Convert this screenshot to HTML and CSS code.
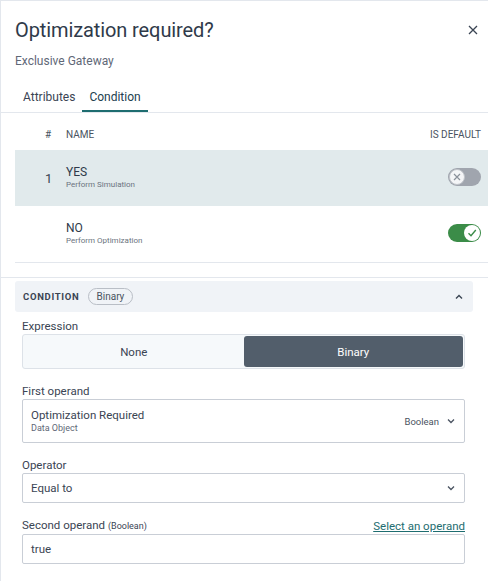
FILE: index.html
```html
<!DOCTYPE html>
<html>
<head>
<meta charset="utf-8">
<link rel="stylesheet" href="styles.css">
</head>
<body>
<div class="panel">
  <div class="head">
    <h1 class="title">Optimization required?</h1>
    <span class="close">
      <svg width="10" height="10" viewBox="0 0 10 10"><path d="M1 1L9 9M9 1L1 9" stroke="#3a4453" stroke-width="1.3" fill="none"/></svg>
    </span>
  </div>
  <div class="subtitle">Exclusive Gateway</div>
  <div class="tabs">
    <span class="tab">Attributes</span>
    <span class="tab active">Condition</span>
  </div>
  <div class="table">
    <div class="thead">
      <span class="c-num">#</span>
      <span class="c-name">NAME</span>
      <span class="c-def">IS DEFAULT</span>
    </div>
    <div class="row selected">
      <span class="c-num num">1</span>
      <span class="c-name">
        <span class="rname">YES</span>
        <span class="rdesc">Perform Simulation</span>
      </span>
      <span class="c-def">
        <span class="toggle off"><span class="knob">
          <svg width="10" height="10" viewBox="0 0 10 10"><path d="M2 2L8 8M8 2L2 8" stroke="#8a909a" stroke-width="1.2" fill="none"/></svg>
        </span></span>
      </span>
    </div>
    <div class="row">
      <span class="c-num num"></span>
      <span class="c-name">
        <span class="rname">NO</span>
        <span class="rdesc">Perform Optimization</span>
      </span>
      <span class="c-def">
        <span class="toggle on"><span class="knob">
          <svg width="12" height="12" viewBox="0 0 12 12"><path d="M2.5 6.2L5 8.7L9.8 3" stroke="#3b8c48" stroke-width="1.4" fill="none"/></svg>
        </span></span>
      </span>
    </div>
  </div>
  <div class="sep"></div>
  <div class="section">
    <div class="sec-head">
      <span class="sec-title">CONDITION</span>
      <span class="pill">Binary</span>
      <span class="chev-up">
        <svg width="8" height="6" viewBox="0 0 8 6"><path d="M1 4.5L4 1.5L7 4.5" stroke="#3a4453" stroke-width="1.4" fill="none"/></svg>
      </span>
    </div>
    <div class="form">
      <div class="field">
        <label class="lbl">Expression</label>
        <div class="seg">
          <span class="seg-item">None</span>
          <span class="seg-item active">Binary</span>
        </div>
      </div>
      <div class="field">
        <label class="lbl">First operand</label>
        <div class="box big">
          <div class="box-main">
            <span class="val">Optimization Required</span>
            <span class="sub">Data Object</span>
          </div>
          <span class="type">Boolean</span>
          <svg class="chev" width="8" height="6" viewBox="0 0 8 6"><path d="M1 1.5L4 4.5L7 1.5" stroke="#4a5361" stroke-width="1.3" fill="none"/></svg>
        </div>
      </div>
      <div class="field">
        <label class="lbl">Operator</label>
        <div class="box">
          <div class="box-main"><span class="val">Equal to</span></div>
          <svg class="chev" width="8" height="6" viewBox="0 0 8 6"><path d="M1 1.5L4 4.5L7 1.5" stroke="#4a5361" stroke-width="1.3" fill="none"/></svg>
        </div>
      </div>
      <div class="field">
        <div class="lbl-row">
          <label class="lbl">Second operand <small>(Boolean)</small></label>
          <a class="link">Select an operand</a>
        </div>
        <div class="box">
          <div class="box-main"><span class="val">true</span></div>
        </div>
      </div>
    </div>
  </div>
</div>
</body>
</html>
```
FILE: styles.css
```css
* { box-sizing: border-box; }
html, body { margin: 0; padding: 0; background: #fff; }
body {
  font-family: Roboto, "Noto Sans", Arial, sans-serif;
  color: #3a4453;
  width: 488px;
  height: 581px;
  overflow: hidden;
}
.panel {
  border-top: 1px solid #e3e7ed;
  border-left: 1px solid #e3e7ed;
  height: 581px;
}
.head {
  display: flex;
  align-items: center;
  justify-content: space-between;
  padding: 8px 10px 0 14px;
  height: 50px;
}
.title {
  margin: 0;
  font-size: 20px;
  line-height: 24px;
  font-weight: 400;
  color: #2f3a4a;
  letter-spacing: -0.1px;
}
.close { display: flex; }
.subtitle {
  padding-left: 14px;
  font-size: 12px;
  line-height: 20px;
  height: 20px;
  color: #5f6877;
}
.tabs {
  display: flex;
  padding-left: 15px;
  border-bottom: 1px solid #e3e7ed;
  height: 42px;
  align-items: stretch;
}
.tab {
  font-size: 12px;
  line-height: 14px;
  color: #3a4453;
  padding: 19px 7px 0;
  border-bottom: 2px solid transparent;
}
.tab.active {
  border-bottom-color: #1e6d70;
  color: #22404f;
}
.table { margin-left: 14px; border-bottom: 1px solid #e3e7ed; }
.thead {
  display: flex;
  align-items: center;
  height: 37px;
  font-size: 10px;
  color: #4a5361;
  padding-top: 5px;
}
.c-num { width: 51px; padding-left: 30px; flex: none; }
.c-name { flex: 1; display: flex; flex-direction: column; }
.c-def { flex: none; padding-right: 7px; text-align: right; }
.row {
  display: flex;
  align-items: center;
  height: 56px;
}
.row.selected { background: #e1eaec; }
.num { font-size: 13px; color: #3a4453; }
.rname { font-size: 12px; color: #2f3a4a; line-height: 14px; }
.rdesc { font-size: 8px; color: #6b7380; line-height: 12px; }
.toggle {
  display: flex;
  align-items: center;
  width: 33px;
  height: 18px;
  border-radius: 9px;
  padding: 1px;
  margin-top: -3px;
}
.toggle.off { background: #a0a5ae; justify-content: flex-start; }
.toggle.on { background: #3b8c48; justify-content: flex-end; }
.knob {
  width: 16px; height: 16px;
  border-radius: 50%;
  background: #fff;
  display: flex; align-items: center; justify-content: center;
}
.toggle.off .knob { background: #f4f5f7; border: 1px solid #c0c4ca; }
.sep { height: 15px; border-bottom: 1px solid #e3e7ed; }
.section { padding: 3px 15px 0 14px; }
.sec-head {
  display: flex;
  align-items: center;
  background: #f0f3f7;
  border-radius: 3px;
  height: 31px;
  padding: 0 8px 0 8px;
}
.sec-title {
  font-size: 9.5px;
  font-weight: 700;
  color: #3a4453;
  letter-spacing: 0.7px;
}
.pill {
  margin-left: 8px;
  font-size: 10px;
  color: #4a5361;
  border: 1px solid #b9bec6;
  border-radius: 9px;
  padding: 2px 8px;
  line-height: 11px;
}
.chev-up { margin-left: auto; display: flex; padding-right: 2px; }
.form { padding: 0 8px 0 7px; }
.field { margin-top: 7px; }
.field + .field { margin-top: 15px; }
.lbl { display: block; font-size: 11.5px; color: #3a4453; line-height: 14px; margin-bottom: 1px; }
.lbl small { font-size: 9px; }
.lbl-row { display: flex; justify-content: space-between; align-items: flex-end; }
.link { font-size: 11.5px; color: #1e6d70; text-decoration: underline; line-height: 14px; margin-bottom: 1px; }
.seg {
  display: flex;
  border: 1px solid #dde2e8;
  border-radius: 3px;
  height: 35px;
  padding: 1px;
  background: #f6f9fb;
}
.seg-item {
  flex: 1;
  display: flex; align-items: center; justify-content: center;
  font-size: 11.5px;
  color: #3a4453;
  border-radius: 3px;
}
.seg-item.active { background: #525e6b; color: #fff; }
.box {
  display: flex;
  align-items: center;
  border: 1px solid #c9ced6;
  border-radius: 2px;
  height: 30px;
  padding: 0 9px 0 8px;
}
.box.big { height: 44px; }
.box-main { flex: 1; display: flex; flex-direction: column; }
.val { font-size: 11.5px; color: #3a4453; line-height: 14px; }
.sub { font-size: 9px; color: #5f6877; line-height: 12px; }
.type { font-size: 9.5px; color: #4a5361; margin-right: 8px; }
.chev { flex: none; }
```
